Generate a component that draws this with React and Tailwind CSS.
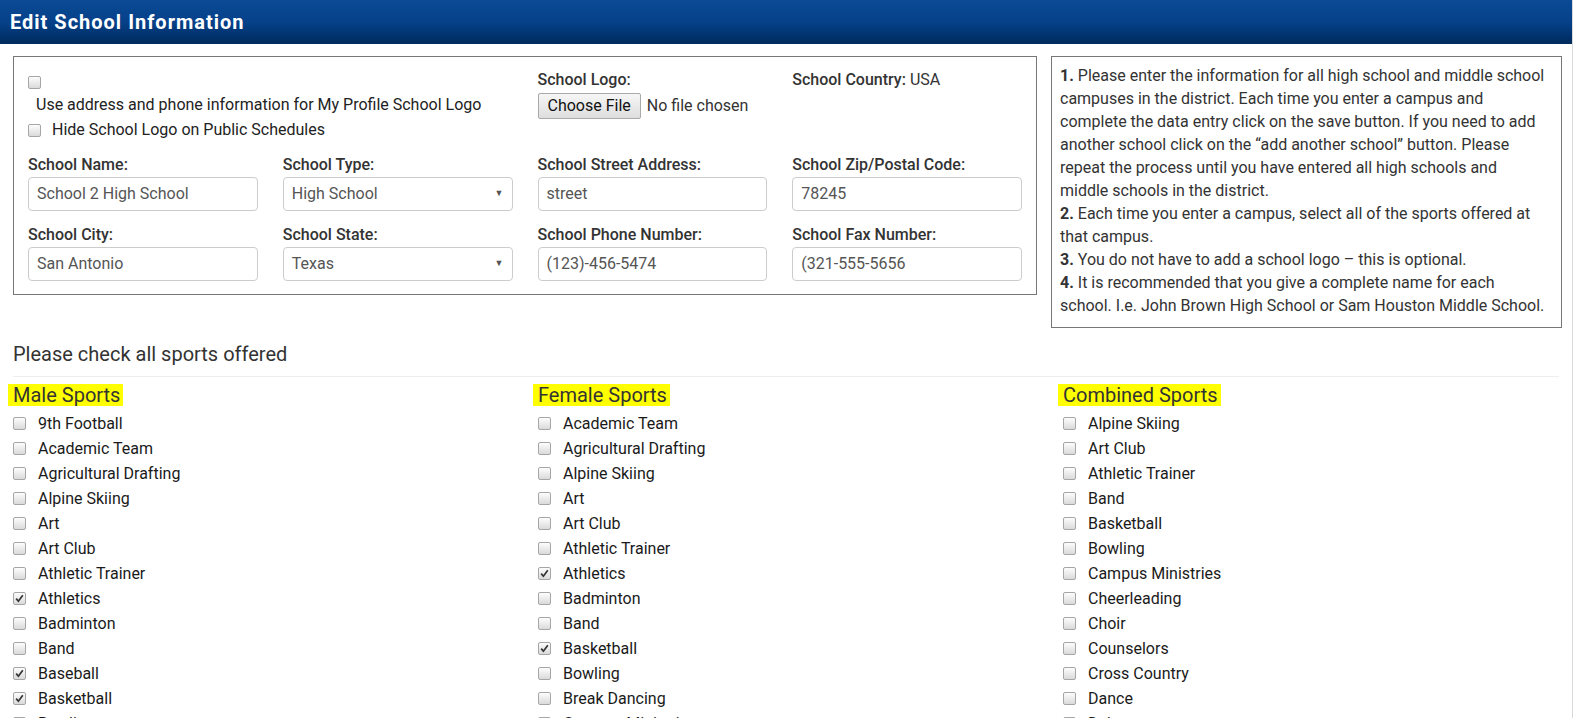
import React from "react";

const maleSports = [
    ["9th Football", false],
    ["Academic Team", false],
    ["Agricultural Drafting", false],
    ["Alpine Skiing", false],
    ["Art", false],
    ["Art Club", false],
    ["Athletic Trainer", false],
    ["Athletics", true],
    ["Badminton", false],
    ["Band", false],
    ["Baseball", true],
    ["Basketball", true],
    ["Bowling", false],
];

const femaleSports = [
    ["Academic Team", false],
    ["Agricultural Drafting", false],
    ["Alpine Skiing", false],
    ["Art", false],
    ["Art Club", false],
    ["Athletic Trainer", false],
    ["Athletics", true],
    ["Badminton", false],
    ["Band", false],
    ["Basketball", true],
    ["Bowling", false],
    ["Break Dancing", false],
    ["Campus Ministries", false],
];

const combinedSports = [
    ["Alpine Skiing", false],
    ["Art Club", false],
    ["Athletic Trainer", false],
    ["Band", false],
    ["Basketball", false],
    ["Bowling", false],
    ["Campus Ministries", false],
    ["Cheerleading", false],
    ["Choir", false],
    ["Counselors", false],
    ["Cross Country", false],
    ["Dance", false],
    ["Debate", false],
];

// old chrome style checkbox
const Check = ({ checked }) => (
    <span className="inline-flex h-[13px] w-[13px] shrink-0 items-center justify-center rounded-[2px] border border-[#a6a6a6] bg-gradient-to-b from-[#fdfdfd] to-[#dadada]">
        {checked && (
            <svg width="9" height="9" viewBox="0 0 9 9">
                <path d="M1.2 4.6 L3.4 7.2 L7.8 1.2" fill="none" stroke="#333" strokeWidth="1.7" />
            </svg>
        )}
    </span>
);

const Field = ({ label, value, select }) => (
    <div className="flex flex-col">
        <label className="text-[16px] font-medium leading-5 text-[#333]">{label}</label>
        <div className="mt-[2px] flex h-[34px] items-center justify-between rounded-[4px] border border-[#ccc] px-2 text-[16px] text-[#555]">
            <span>{value}</span>
            {select && <span className="text-[9px] text-[#555]">▼</span>}
        </div>
    </div>
);

const SportColumn = ({ title, items }) => (
    <div className="flex flex-col">
        <div className="flex h-[32px] items-center">
            <span className="-ml-[5px] bg-[#ffff00] pl-[5px] pr-[3px] text-[20px] leading-[22px] text-[#333]">
                {title}
            </span>
        </div>
        {items.map(([name, checked], index) => (
            <div className="flex h-[25px] items-center gap-[12px]" key={index}>
                <Check checked={checked} />
                <span className="text-[16px] text-[#1a1a1a]">{name}</span>
            </div>
        ))}
    </div>
);

export default function App() {
    return (
        <div className="flex h-[718px] overflow-hidden bg-white font-['Roboto',sans-serif]">
            <div className="w-[1573px] shrink-0 border-r border-[#d9d9d9]">
                {/* Header */}
                <div className="flex h-[44px] items-center bg-gradient-to-b from-[#0b4a94] via-[#06418a] to-[#002a5c] px-[10px]">
                    <h1 className="text-[20px] font-bold tracking-[1px] text-white">
                        Edit School Information
                    </h1>
                </div>

                {/* Top section */}
                <div className="mt-[12px] flex items-start gap-[14px] pl-[13px]">
                    <div className="w-[1024px] border border-[#777] px-[14px] pb-[13px] pt-[13px]">
                        <div className="grid grid-cols-4 gap-x-[25px]">
                            <div className="col-span-2 flex flex-col">
                                <div className="flex h-5 items-center pt-[4px]">
                                    <Check />
                                </div>
                                <div className="mt-[5px] pl-2 text-[16px] leading-5 text-[#222]">
                                    Use address and phone information for My Profile School Logo
                                </div>
                                <div className="mt-[5px] flex h-5 items-center gap-[11px]">
                                    <Check />
                                    <span className="text-[16px] text-[#222]">
                                        Hide School Logo on Public Schedules
                                    </span>
                                </div>
                            </div>
                            <div className="flex flex-col">
                                <span className="text-[16px] font-medium leading-5 text-[#333]">School Logo:</span>
                                <div className="mt-[3px] flex items-center gap-[6px]">
                                    <button className="h-[26px] rounded-[2px] border border-[#a9a9a9] bg-gradient-to-b from-[#f6f6f6] to-[#dedede] px-[9px] text-[16px] text-[#111]">
                                        Choose File
                                    </button>
                                    <span className="text-[16px] text-[#333]">No file chosen</span>
                                </div>
                            </div>
                            <div className="text-[16px] leading-5 text-[#333]">
                                <span className="font-medium">School Country:</span> USA
                            </div>
                        </div>

                        <div className="mt-[15px] grid grid-cols-4 gap-x-[25px] gap-y-[14px]">
                            <Field label="School Name:" value="School 2 High School" />
                            <Field label="School Type:" value="High School" select />
                            <Field label="School Street Address:" value="street" />
                            <Field label="School Zip/Postal Code:" value="78245" />
                            <Field label="School City:" value="San Antonio" />
                            <Field label="School State:" value="Texas" select />
                            <Field label="School Phone Number:" value="(123)-456-5474" />
                            <Field label="School Fax Number:" value="(321-555-5656" />
                        </div>
                    </div>

                    <div className="w-[511px] border border-[#777] pb-[10px] pl-[8px] pr-[15px] pt-[7px] text-[16px] leading-[23px] text-[#333]">
                        <div>
                            <b>1.</b> Please enter the information for all high school and middle school
                            campuses in the district. Each time you enter a campus and complete the data
                            entry click on the save button. If you need to add another school click on the
                            “add another school” button. Please repeat the process until you have entered
                            all high schools and middle schools in the district.
                        </div>
                        <div>
                            <b>2.</b> Each time you enter a campus, select all of the sports offered at
                            that campus.
                        </div>
                        <div>
                            <b>3.</b> You do not have to add a school logo – this is optional.
                        </div>
                        <div>
                            <b>4.</b> It is recommended that you give a complete name for each school.
                            I.e. John Brown High School or Sam Houston Middle School.
                        </div>
                    </div>
                </div>

                {/* Sports */}
                <div className="px-[13px]">
                    <h2 className="mt-[13px] text-[20px] leading-[26px] text-[#333]">
                        Please check all sports offered
                    </h2>
                    <div className="mt-[9px] border-t border-[#eee]" />
                    <div className="mt-[2px] grid grid-cols-[525px_525px_1fr]">
                        <SportColumn title="Male Sports" items={maleSports} />
                        <SportColumn title="Female Sports" items={femaleSports} />
                        <SportColumn title="Combined Sports" items={combinedSports} />
                    </div>
                </div>
            </div>
        </div>
    );
}
